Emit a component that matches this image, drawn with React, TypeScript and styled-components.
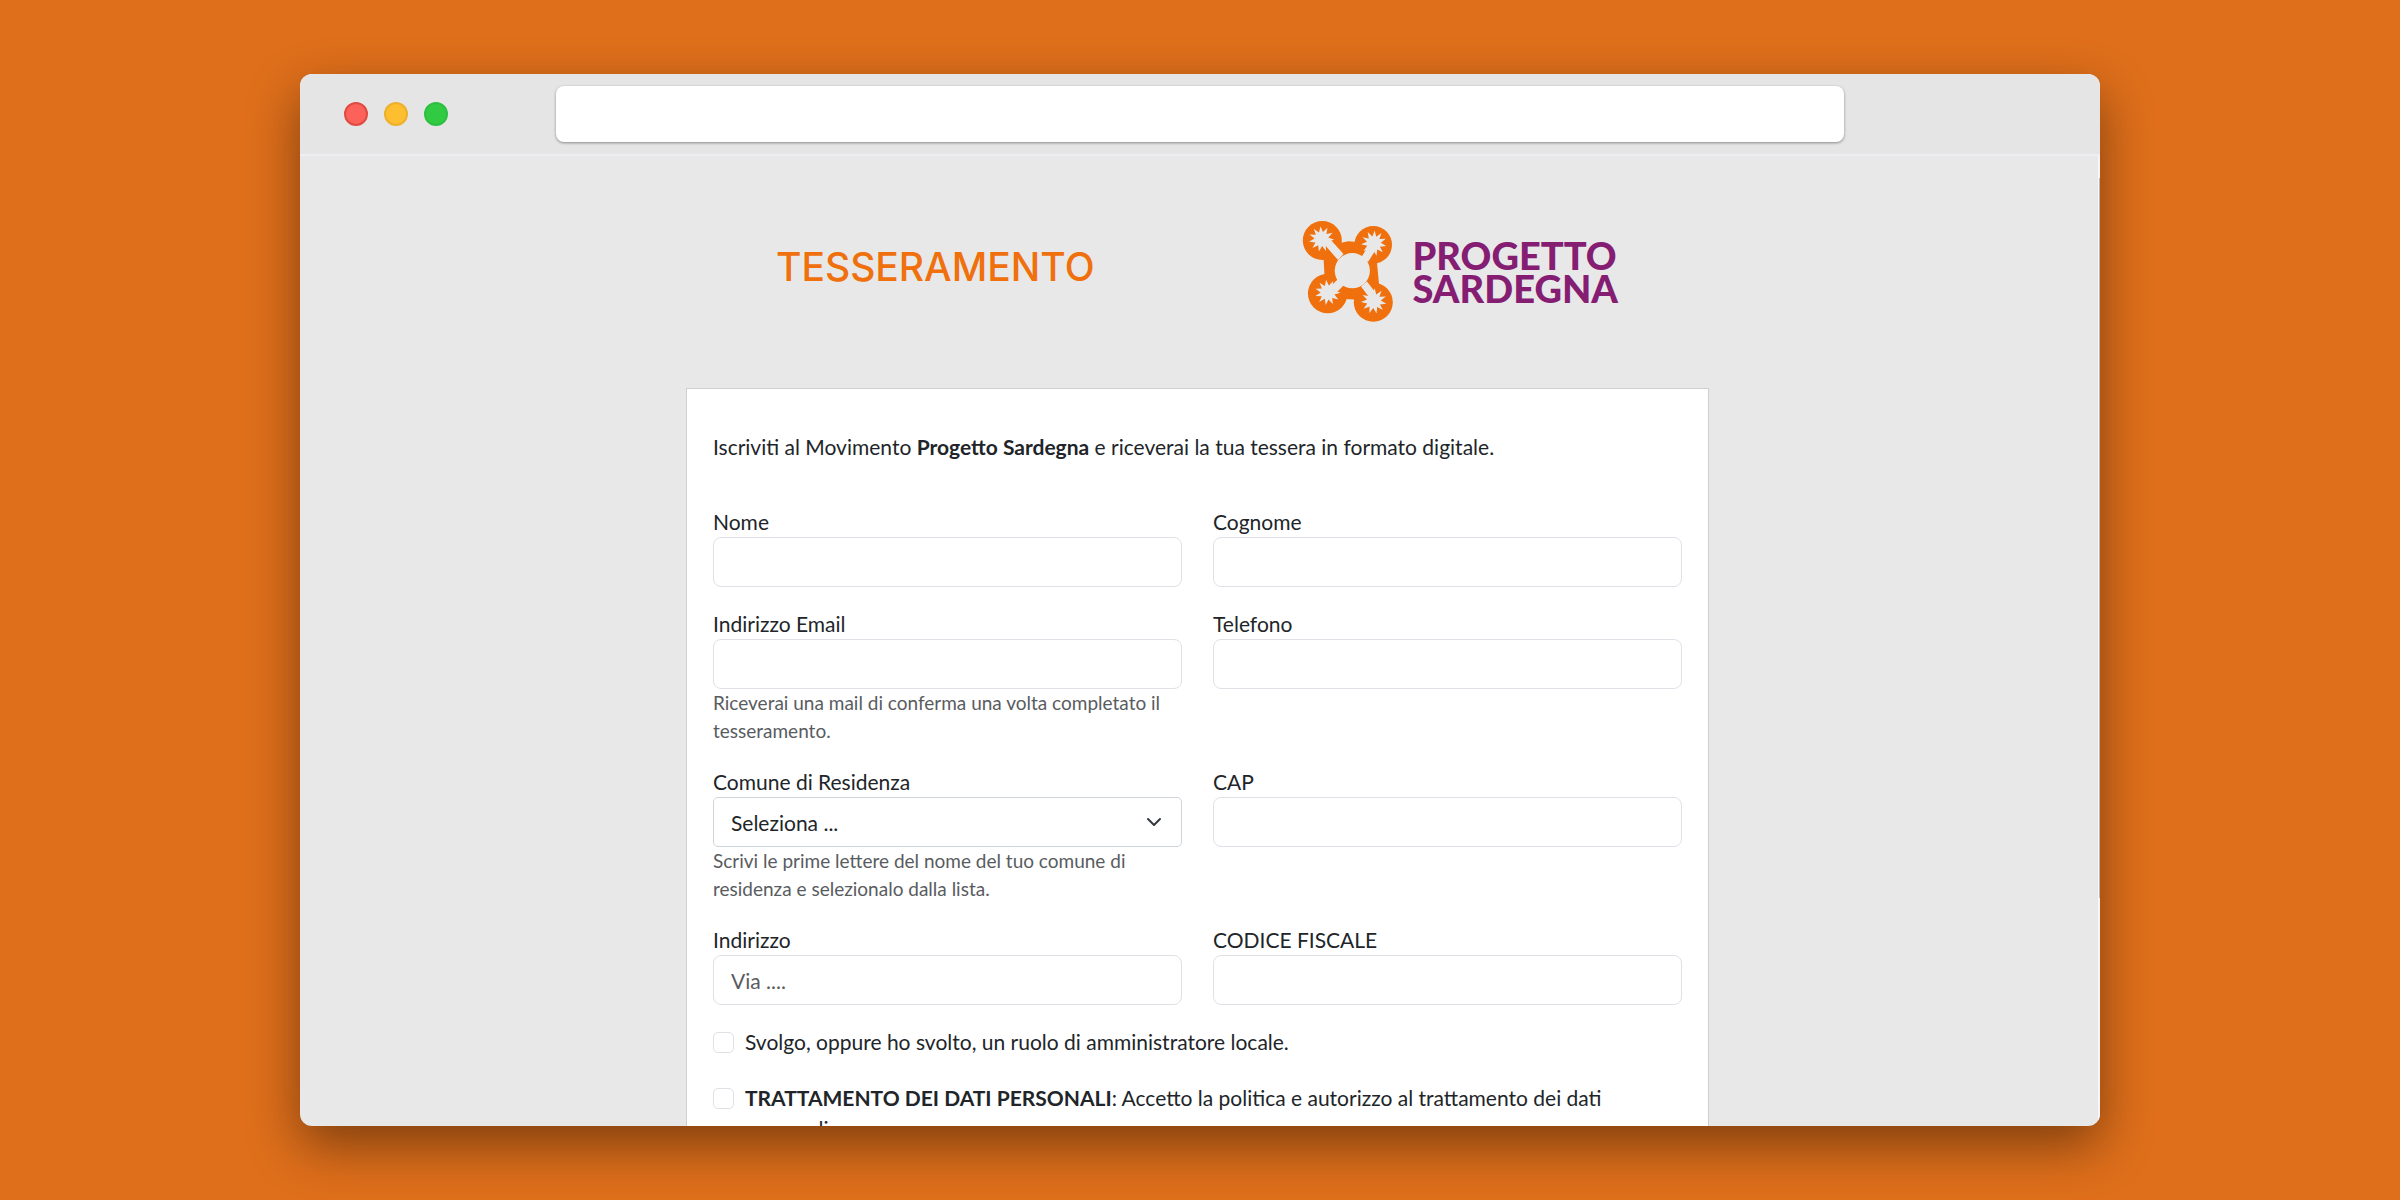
import React from "react";
import styled, { createGlobalStyle } from "styled-components";

const SURFACE = "#e8e8e8";
const ORANGE = "#ef700c";
const PURPLE = "#851d73";

const GlobalStyle = createGlobalStyle`
  *, *::before, *::after { box-sizing: border-box; }
  body {
    margin: 0;
    background: #df6f1b;
    color: #212529;
    font-family: Lato, "Open Sans", sans-serif;
    font-size: 21px;
    line-height: 31px;
  }
  h1, p { margin: 0; }
  input, select { font: inherit; color: inherit; }
`;

const Stage = styled.div`
  height: 100vh;
  padding: 74px 12.5vw;
`;

const Window = styled.div`
  display: flex;
  flex-direction: column;
  height: 100%;
  overflow: hidden;
  border-radius: 12px;
  background: ${SURFACE};
  box-shadow: 0 20px 52px rgba(0, 0, 0, 0.43);
`;

const Toolbar = styled.header`
  display: grid;
  grid-template-columns: 212px 1fr 212px;
  align-items: center;
  flex: none;
  padding: 12px 44px;
  background: #e5e5e5;
  border-bottom: 2px solid #eeeef2;
`;

const Lights = styled.div`
  display: flex;
  gap: 16px;
`;

const Light = styled.button<{ $fill: string; $edge: string }>`
  width: 24px;
  height: 24px;
  padding: 0;
  border: 2px solid ${(p) => p.$edge};
  border-radius: 50%;
  background: ${(p) => p.$fill};
`;

const Address = styled.input`
  width: 100%;
  height: 56px;
  padding: 0 20px;
  border: 0;
  border-radius: 8px;
  background: #fff;
  box-shadow: 0 1px 3px rgba(0, 0, 0, 0.4);
`;

const Viewport = styled.div`
  display: flex;
  flex: 1;
  min-height: 0;
`;

const Page = styled.main`
  flex: 1;
  overflow: hidden;
  padding-right: 3px;
`;

const ScrollTrack = styled.div`
  flex: none;
  width: 2px;
  padding: 22px 0 0 1px;
  background: #f6f6f6;
`;

const ScrollThumb = styled.div`
  height: 76%;
  background: #b8b8b8;
`;

const Container = styled.div`
  max-width: 1049px;
  margin: 0 auto;
  padding: 0 13px;
`;

const Masthead = styled.div`
  display: grid;
  grid-template-columns: 1fr 1fr;
  align-items: center;
  justify-items: center;
  margin: 0 -13px;
  padding: 65px 0 66px;
`;

const Title = styled.h1`
  margin-bottom: 10px;
  color: ${ORANGE};
  font-family: Inter, Lato, sans-serif;
  font-size: 39px;
  font-weight: 500;
  line-height: 50px;
`;

const Brand = styled.div`
  display: flex;
  align-items: center;
  gap: 20px;
  color: ${PURPLE};
  font-size: 38px;
  font-weight: 900;
  line-height: 33px;
`;

const Card = styled.section`
  padding: 42px 26px;
  border: 1px solid #cfd0d1;
  background: #fff;
`;

const Form = styled.form`
  display: flex;
  flex-direction: column;
  gap: 21px;
  margin-top: 44px;
`;

const Fields = styled.div`
  display: grid;
  grid-template-columns: 1fr 1fr;
  gap: 21px 31px;
`;

const Cell = styled.div`
  display: flex;
  flex-direction: column;
`;

const TextInput = styled.input`
  width: 100%;
  height: 50px;
  padding: 0 17px;
  border: 1px solid #dee2e6;
  border-radius: 8px;
  background: #fff;
  &::placeholder { color: #595c5f; opacity: 1; }
`;

const SelectWrap = styled.div`
  position: relative;
  display: flex;
  svg {
    position: absolute;
    top: 17px;
    right: 20px;
    pointer-events: none;
  }
`;

const Select = styled.select`
  appearance: none;
  width: 100%;
  height: 50px;
  padding: 0 17px;
  border: 1px solid #ced4da;
  border-radius: 5px;
  background: #fff;
`;

const Hint = styled.small`
  color: #595c5f;
  font-size: 19px;
  line-height: 28px;
`;

const Checks = styled.div`
  display: flex;
  flex-direction: column;
  gap: 25px;
`;

const Check = styled.div`
  display: flex;
  align-items: flex-start;
  gap: 11px;
`;

const Box = styled.input`
  appearance: none;
  flex: none;
  width: 21px;
  height: 21px;
  margin: 6px 0 0;
  border: 1px solid #dee2e6;
  border-radius: 5px;
  background: #fff;
  &:checked { background: ${ORANGE}; }
`;

function star(cx: number, cy: number, outer: number, inner: number, points: number, turn: number) {
  const pts: string[] = [];
  for (let i = 0; i < points * 2; i++) {
    const r = i % 2 ? inner : outer;
    const a = turn + (i * Math.PI) / points;
    pts.push(`${(cx + r * Math.cos(a)).toFixed(1)},${(cy + r * Math.sin(a)).toFixed(1)}`);
  }
  return pts.join(" ");
}

function Emblem() {
  return (
    <svg width="91" height="101" viewBox="0 0 91 101" aria-hidden="true">
      <g fill={ORANGE}>
        <circle cx="20.3" cy="19.5" r="19.5" />
        <circle cx="71.2" cy="23.8" r="18.8" />
        <circle cx="25.7" cy="72.5" r="19.8" />
        <circle cx="71.3" cy="81.3" r="19.5" />
        <path d="M38 22 L46 20.3 L56 21 L75 42 L77 63 L52 78.5 L43 78 L22.5 54 L21.5 37 Z" />
      </g>
      <g fill={SURFACE}>
        <circle cx="50.3" cy="49.7" r="17.6" />
        <polygon points={star(19.5, 18, 12.8, 7, 11, -1.65)} />
        <polygon points={star(71.8, 22.3, 12.8, 7, 11, -1.5)} />
        <polygon points={star(25.7, 71.5, 12.8, 7, 11, -1.7)} />
        <polygon points={star(71.8, 80, 12.8, 7, 11, -1.5)} />
        <path d="M22 23 L27.5 17.5 L41.5 33 L36 39 Z" />
        <path d="M67 24 L73 30 L66 41 L59.5 36 Z" />
        <path d="M29 65 L36 58 L42.5 63.5 L34 72 Z" />
        <path d="M59 65.5 L65 60.5 L73 71 L67 76 Z" />
      </g>
    </svg>
  );
}

type FieldProps = { id: string; label: string; hint?: string; placeholder?: string; type?: string };

function Field({ id, label, hint, placeholder, type = "text" }: FieldProps) {
  return (
    <Cell>
      <label htmlFor={id}>{label}</label>
      <TextInput id={id} type={type} placeholder={placeholder} />
      {hint && <Hint>{hint}</Hint>}
    </Cell>
  );
}

export default function App() {
  return (
    <Stage>
      <GlobalStyle />
      <Window>
        <Toolbar>
          <Lights>
            <Light type="button" aria-label="Chiudi" $fill="#fc615a" $edge="#df4b40" />
            <Light type="button" aria-label="Riduci" $fill="#fdbe2f" $edge="#edb02b" />
            <Light type="button" aria-label="Espandi" $fill="#31cb43" $edge="#2dc040" />
          </Lights>
          <Address type="url" aria-label="Indirizzo web" />
        </Toolbar>
        <Viewport>
          <Page>
            <Container>
              <Masthead>
                <Title>TESSERAMENTO</Title>
                <Brand>
                  <Emblem />
                  <div>
                    PROGETTO
                    <br />
                    SARDEGNA
                  </div>
                </Brand>
              </Masthead>
              <Card>
                <p>
                  Iscriviti al Movimento <strong>Progetto Sardegna</strong> e riceverai la tua tessera in formato
                  digitale.
                </p>
                <Form>
                  <Fields>
                    <Field id="nome" label="Nome" />
                    <Field id="cognome" label="Cognome" />
                    <Field
                      id="email"
                      type="email"
                      label="Indirizzo Email"
                      hint="Riceverai una mail di conferma una volta completato il tesseramento."
                    />
                    <Field id="telefono" type="tel" label="Telefono" />
                    <Cell>
                      <label htmlFor="comune">Comune di Residenza</label>
                      <SelectWrap>
                        <Select id="comune">
                          <option>Seleziona ...</option>
                        </Select>
                        <svg width="16" height="16" viewBox="0 0 16 16" fill="none" stroke="#343a40" strokeWidth="2" strokeLinecap="round" strokeLinejoin="round">
                          <path d="m2 5 6 6 6-6" />
                        </svg>
                      </SelectWrap>
                      <Hint>Scrivi le prime lettere del nome del tuo comune di residenza e selezionalo dalla lista.</Hint>
                    </Cell>
                    <Field id="cap" label="CAP" />
                    <Field id="indirizzo" label="Indirizzo" placeholder="Via ...." />
                    <Field id="cf" label="CODICE FISCALE" />
                  </Fields>
                  <Checks>
                    <Check>
                      <Box id="amministratore" type="checkbox" />
                      <label htmlFor="amministratore">
                        Svolgo, oppure ho svolto, un ruolo di amministratore locale.
                      </label>
                    </Check>
                    <Check>
                      <Box id="privacy" type="checkbox" />
                      <label htmlFor="privacy">
                        <strong>TRATTAMENTO DEI DATI PERSONALI</strong>: Accetto la politica e autorizzo al trattamento
                        dei dati personali.
                      </label>
                    </Check>
                  </Checks>
                </Form>
              </Card>
            </Container>
          </Page>
          <ScrollTrack>
            <ScrollThumb />
          </ScrollTrack>
        </Viewport>
      </Window>
    </Stage>
  );
}
